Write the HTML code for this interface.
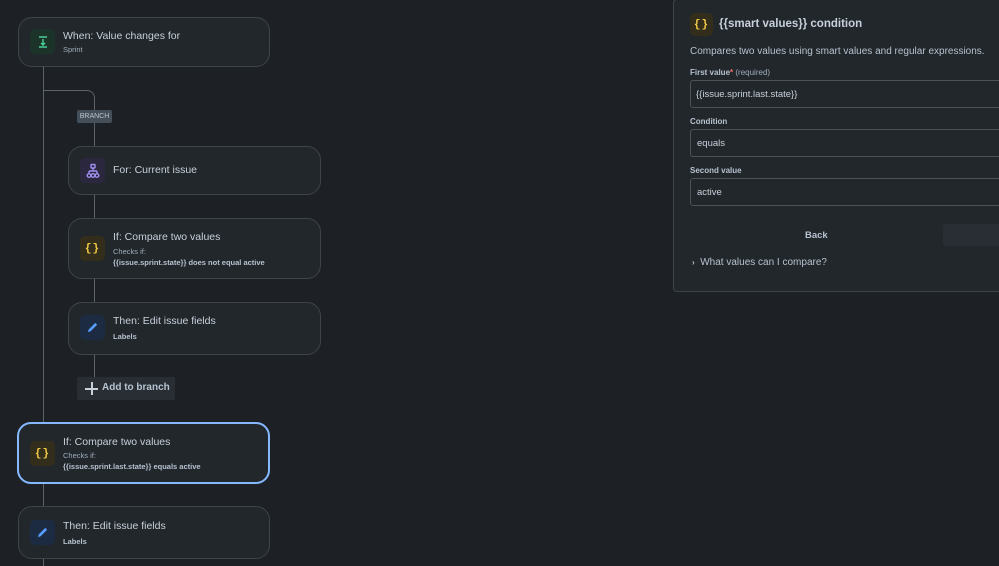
<!DOCTYPE html>
<html><head><style>
*{box-sizing:border-box;margin:0;padding:0}
body{width:999px;height:566px;background:#1d2125;font-family:"Liberation Sans",sans-serif;color:#c7d1db;position:relative;overflow:hidden}
.card{position:absolute;background:#22272b;border:1px solid #3d444b;border-radius:14px}
.ic{position:absolute;width:25px;height:25px;border-radius:5px;display:flex;align-items:center;justify-content:center}
.t{position:absolute;font-size:10.5px;color:#c7d1db}
.s{position:absolute;font-size:7.5px;color:#9fadbc}
.b{position:absolute;font-size:7.5px;color:#b6c2cf;font-weight:bold}
.line{position:absolute;background:#5b636b;width:1px}
.br{color:#f5cd47;font-weight:bold;font-size:11px;font-family:"Liberation Mono",monospace;letter-spacing:1px}
.lbl{position:absolute;left:690px;font-size:8px;color:#b6c2cf;font-weight:bold}
.inp{position:absolute;left:690px;width:320px;height:28px;background:#22272b;border:1px solid #4a525a;border-radius:3px;font-size:9.5px;color:#c7d1db;padding:8px 6px}
</style></head><body>
<div class="line" style="left:43px;top:67px;height:499px"></div>
<div style="position:absolute;left:43px;top:90px;width:52px;height:20px;border-top:1px solid #5b636b;border-right:1px solid #5b636b;border-top-right-radius:8px"></div>
<div class="line" style="left:94px;top:122px;height:255px"></div>
<div style="position:absolute;left:77px;top:110px;width:35px;height:13px;background:#454f59;border-radius:2px;font-size:7px;color:#b6c2cf;text-align:center;line-height:13px">BRANCH</div>

<div class="card" style="left:18px;top:17px;width:252px;height:50px"></div>
<div class="ic" style="left:30px;top:29px;background:#1c3329"><svg width="14" height="14" viewBox="0 0 14 14" stroke="#4bce97" stroke-width="1.4" fill="none"><path d="M3 2h8M3 12h8M7 4v6M5 8l2 2 2-2"/></svg></div>
<div class="t" style="left:63px;top:30px">When: Value changes for</div>
<div class="s" style="left:63px;top:45px">Sprint</div>

<div class="card" style="left:68px;top:146px;width:253px;height:49px"></div>
<div class="ic" style="left:80px;top:158px;background:#2b273f"><svg width="16" height="16" viewBox="0 0 16 16" stroke="#9f8fef" stroke-width="1.4" fill="none"><rect x="6" y="1.5" width="4" height="3.5" rx="0.5"/><path d="M8 5v3M4 8h8M4 8v3M12 8v3"/><circle cx="4" cy="12.5" r="1.8"/><circle cx="8" cy="12.5" r="1.8"/><circle cx="12" cy="12.5" r="1.8"/></svg></div>
<div class="t" style="left:113px;top:164px">For: Current issue</div>

<div class="card" style="left:68px;top:218px;width:253px;height:61px"></div>
<div class="ic" style="left:80px;top:236px;background:#332e1b"><span class="br">{}</span></div>
<div class="t" style="left:113px;top:231px">If: Compare two values</div>
<div class="s" style="left:113px;top:247px">Checks if:</div>
<div class="b" style="left:113px;top:258px">{{issue.sprint.state}} does not equal active</div>

<div class="card" style="left:68px;top:302px;width:253px;height:53px"></div>
<div class="ic" style="left:80px;top:315px;background:#1c2b41"><svg width="13" height="13" viewBox="0 0 14 14"><path d="M2 12l1-3 7-7 2 2-7 7z" fill="#579dff"/></svg></div>
<div class="t" style="left:113px;top:315px">Then: Edit issue fields</div>
<div class="b" style="left:113px;top:332px">Labels</div>

<div style="position:absolute;left:77px;top:377px;width:98px;height:23px;background:#282e33;border-radius:2px"></div>
<div style="position:absolute;left:85px;top:382px;width:13px;height:13px"><div style="position:absolute;left:6px;top:0;width:1.5px;height:13px;background:#c7d1db"></div><div style="position:absolute;left:0;top:6px;width:13px;height:1.5px;background:#c7d1db"></div></div>
<div style="position:absolute;left:102px;top:382px;font-size:10px;font-weight:bold;color:#b6c2cf">Add to branch</div>

<div class="card" style="left:17px;top:422px;width:253px;height:62px;border:2px solid #85b8ff"></div>
<div class="ic" style="left:30px;top:441px;background:#332e1b"><span class="br">{}</span></div>
<div class="t" style="left:63px;top:436px">If: Compare two values</div>
<div class="s" style="left:63px;top:451px">Checks if:</div>
<div class="b" style="left:63px;top:462px">{{issue.sprint.last.state}} equals active</div>

<div class="card" style="left:18px;top:506px;width:252px;height:53px"></div>
<div class="ic" style="left:30px;top:520px;background:#1c2b41"><svg width="13" height="13" viewBox="0 0 14 14"><path d="M2 12l1-3 7-7 2 2-7 7z" fill="#579dff"/></svg></div>
<div class="t" style="left:63px;top:520px">Then: Edit issue fields</div>
<div class="b" style="left:63px;top:537px">Labels</div>

<div style="position:absolute;left:673px;top:-1px;width:340px;height:293px;background:#22272b;border:1px solid #3d444b;border-radius:4px"></div>
<div class="ic" style="left:690px;top:13px;width:23px;height:23px;background:#332e1b"><span class="br">{}</span></div>
<div style="position:absolute;left:719px;top:18px;font-size:11.5px;font-weight:bold;color:#c7d1db">{{smart values}} condition</div>
<div style="position:absolute;left:690px;top:46px;font-size:10px;color:#b6c2cf">Compares two values using smart values and regular expressions.</div>
<div class="lbl" style="top:68px">First value<span style="color:#f87168">*</span> <span style="font-weight:normal;color:#9fadbc">(required)</span></div>
<div class="inp" style="top:80px;padding-left:5px">{{issue.sprint.last.state}}</div>
<div class="lbl" style="top:117px">Condition</div>
<div class="inp" style="top:129px">equals</div>
<div class="lbl" style="top:166px">Second value</div>
<div class="inp" style="top:178px">active</div>
<div style="position:absolute;left:805px;top:230px;font-size:9.5px;font-weight:bold;color:#b6c2cf">Back</div>
<div style="position:absolute;left:943px;top:224px;width:60px;height:22px;background:#282e33;border-radius:3px"></div>
<div style="position:absolute;left:692px;top:257px;font-size:10px;color:#b6c2cf"><span style="font-size:8px;font-weight:bold">›</span>&nbsp; What values can I compare?</div>
</body></html>
